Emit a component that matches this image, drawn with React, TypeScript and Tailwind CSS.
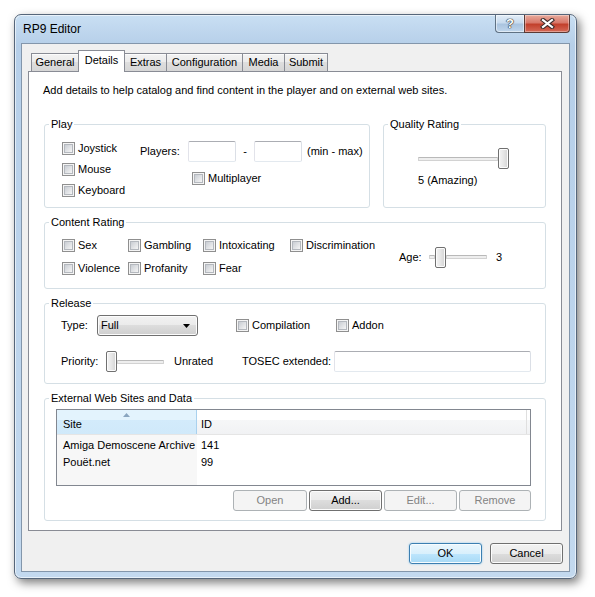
import type { ReactNode } from "react";

const FONT = "font-['Liberation_Sans',Arial,sans-serif]";

function Checkbox({ label }: { label: string }) {
  return (
    <div className="flex items-center gap-[3px]">
      <span className="flex h-[13px] w-[13px] flex-none border border-[#8f8f8f] bg-[#f4f4f4] p-px">
        <span className="h-full w-full border border-[#b4b8be] bg-[linear-gradient(135deg,#c9cdd3,#f5f5f5)]" />
      </span>
      <span className="whitespace-nowrap">{label}</span>
    </div>
  );
}

function Thumb() {
  return (
    <span className="h-[21px] w-[11px] flex-none rounded-[2px] border border-[#707070] bg-[linear-gradient(90deg,#f4f4f4,#e6e6e6_50%,#d4d4d4)] shadow-[inset_0_0_0_1px_#fcfcfc]" />
  );
}

function Track({ className = "" }: { className?: string }) {
  return (
    <span
      className={`h-[4px] flex-none rounded-[1px] border border-[#d2d2d2] border-t-[#b9b9b9] bg-[#eeeeee] ${className}`}
    />
  );
}

function TextBox({ className = "" }: { className?: string }) {
  return (
    <span
      className={`block h-[21px] flex-none rounded-[2px] border border-[#abadb3] border-r-[#dbdfe6] border-b-[#e3e9ef] border-l-[#e2e3ea] bg-white ${className}`}
    />
  );
}

function Group({
  title,
  className = "",
  children
}: {
  title: string;
  className?: string;
  children: ReactNode;
}) {
  return (
    <fieldset className={`min-w-0 rounded-[3px] border border-[#d5dfe5] ${className}`}>
      <legend className="ml-[4px] px-[2px] leading-[13px]">{title}</legend>
      {children}
    </fieldset>
  );
}

function Btn({
  label,
  variant = "normal",
  className = ""
}: {
  label: string;
  variant?: "normal" | "disabled" | "default";
  className?: string;
}) {
  const look =
    variant === "disabled"
      ? "border-[#adb2b5] bg-[#f4f4f4] text-[#838383]"
      : variant === "default"
        ? "border-[#3c7fb1] bg-[linear-gradient(#eaf6fd,#d9f0fc_50%,#bee6fd_50%,#a7d9f5)] shadow-[inset_0_0_0_1px_#f7fcfe,0_0_2px_#7ec3ee]"
        : "border-[#707070] bg-[linear-gradient(#f2f2f2,#ebebeb_50%,#dddddd_50%,#cfcfcf)] shadow-[inset_0_0_0_1px_#fcfcfc]";
  return (
    <div
      className={`flex h-[21px] flex-none items-center justify-center rounded-[3px] border ${look} ${className}`}
    >
      {label}
    </div>
  );
}

function Tab({ label, width, active = false }: { label: string; width: string; active?: boolean }) {
  return active ? (
    <div
      className={`relative z-10 -mb-px -ml-px flex h-[22px] items-center justify-center border border-b-0 border-[#898c95] bg-white pb-[2px] ${width}`}
    >
      {label}
    </div>
  ) : (
    <div
      className={`-ml-px flex h-[18px] items-center justify-center border border-b-0 border-[#898c95] bg-[linear-gradient(#f3f3f3,#ebebeb_50%,#dedede_50%,#d6d6d6)] shadow-[inset_0_1px_0_#fcfcfc] ${width}`}
    >
      {label}
    </div>
  );
}

export default function App() {
  return (
    <div
      className={`h-[597px] w-[595px] overflow-hidden bg-white pl-[14px] pt-[14px] text-[11px] leading-[13px] text-black ${FONT}`}
    >
      <div className="flex h-[565px] w-[563px] flex-col rounded-[7px] border border-[#56667a] bg-[linear-gradient(180deg,#c9dff3,#b6cfe9_30px,#c3d9ef)] shadow-[3px_4px_10px_rgba(0,0,0,0.5),inset_0_0_0_1px_rgba(255,255,255,0.6)]">
        {/* title bar */}
        <div className="flex h-[28px] flex-none justify-between">
          <span className="pl-[8px] pt-[7px] text-[12px] leading-[15px]">RP9 Editor</span>
          <div className="flex pr-[6px]">
            <div className="flex h-[18px] w-[29px] items-center justify-center rounded-bl-[4px] border border-t-0 border-r-0 border-[#5f7183] bg-[linear-gradient(#e3edf7,#c8dbee_45%,#aac4df_55%,#c0d6ec)] shadow-[inset_0_0_0_1px_rgba(255,255,255,0.5)]">
              <span className="text-[13px] font-bold leading-[13px] text-white [text-shadow:0_0_1px_#222,0_0_1px_#222,0_0_1px_#222]">
                ?
              </span>
            </div>
            <div className="flex h-[18px] w-[46px] items-center justify-center rounded-br-[4px] border border-t-0 border-[#5b3a35] bg-[linear-gradient(#e9ab9c,#d8786a_45%,#c2402c_55%,#d56a58)] shadow-[inset_0_0_0_1px_rgba(255,255,255,0.35)]">
              <svg width="15" height="11" viewBox="0 0 15 11">
                <path d="M3 2 L12 9 M12 2 L3 9" stroke="#3b2b2b" strokeWidth="4.2" strokeLinecap="square" />
                <path d="M3 2 L12 9 M12 2 L3 9" stroke="#ffffff" strokeWidth="2.2" strokeLinecap="square" />
              </svg>
            </div>
          </div>
        </div>

        {/* client area */}
        <div className="ml-[6px] flex h-[529px] w-[549px] flex-col border border-[#8396ab] bg-[#f0f0f0] px-[6px] pt-[7px]">
          <div className="ml-[4px] flex h-[20px] items-end">
            <Tab label="General" width="w-[48px]" />
            <Tab label="Details" width="w-[47px]" active />
            <Tab label="Extras" width="w-[43px]" />
            <Tab label="Configuration" width="w-[77px]" />
            <Tab label="Media" width="w-[43px]" />
            <Tab label="Submit" width="w-[44px]" />
          </div>

          <div className="flex h-[460px] w-[534px] flex-col border border-[#898c95] bg-white px-[15px] pt-[12px]">
            <p className="-ml-px">
              Add details to help catalog and find content in the player and on external web sites.
            </p>

            <div className="mt-[21px] flex gap-[13px]">
              <Group title="Play" className="h-[90px] w-[326px]">
                <div className="flex pl-[17px]">
                  <div className="flex w-[78px] flex-col pt-[7px]">
                    {["Joystick", "Mouse", "Keyboard"].map((l) => (
                      <div key={l} className="flex h-[21px] items-center">
                        <Checkbox label={l} />
                      </div>
                    ))}
                  </div>
                  <div className="flex flex-col pt-[10px]">
                    <div className="flex h-[21px] items-center">
                      <span className="w-[48px]">Players:</span>
                      <TextBox className="w-[48px]" />
                      <span className="w-[18px] text-center">-</span>
                      <TextBox className="w-[48px]" />
                      <span className="ml-[5px] whitespace-nowrap">(min - max)</span>
                    </div>
                    <div className="mt-[10px] pl-[52px]">
                      <Checkbox label="Multiplayer" />
                    </div>
                  </div>
                </div>
              </Group>

              <Group title="Quality Rating" className="h-[90px] w-[163px]">
                <div className="flex flex-col pl-[34px] pt-[17px]">
                  <div className="flex h-[21px] items-center">
                    <Track className="w-[80px]" />
                    <Thumb />
                  </div>
                  <span className="mt-[5px]">5 (Amazing)</span>
                </div>
              </Group>
            </div>

            <Group title="Content Rating" className="mt-[8px] h-[73px]">
              <div className="flex items-center pl-[17px] pt-[5px]">
                <div className="grid grid-cols-[66px_75px_87px_109px] grid-rows-[23px_23px] items-center">
                  <Checkbox label="Sex" />
                  <Checkbox label="Gambling" />
                  <Checkbox label="Intoxicating" />
                  <Checkbox label="Discrimination" />
                  <Checkbox label="Violence" />
                  <Checkbox label="Profanity" />
                  <Checkbox label="Fear" />
                </div>
                <span className="w-[30px]">Age:</span>
                <div className="flex h-[21px] w-[58px] items-center">
                  <Track className="w-[6px]" />
                  <Thumb />
                  <Track className="w-[41px]" />
                </div>
                <span className="ml-[9px]">3</span>
              </div>
            </Group>

            <Group title="Release" className="mt-[8px] h-[87px]">
              <div className="flex flex-col pl-[16px] pt-[5px]">
                <div className="flex h-[21px] items-center">
                  <span className="w-[36px]">Type:</span>
                  <div className="flex h-[21px] w-[101px] items-center justify-between rounded-[3px] border border-[#707070] bg-[linear-gradient(#f2f2f2,#ebebeb_50%,#dddddd_50%,#cfcfcf)] pl-[3px] pr-[7px] shadow-[inset_0_0_0_1px_#fcfcfc]">
                    <span>Full</span>
                    <svg width="7" height="4" viewBox="0 0 7 4">
                      <path d="M0 0 H7 L3.5 4 Z" fill="#000" />
                    </svg>
                  </div>
                  <div className="ml-[38px] w-[100px]">
                    <Checkbox label="Compilation" />
                  </div>
                  <Checkbox label="Addon" />
                </div>
                <div className="mt-[15px] flex h-[21px] items-center">
                  <span className="w-[45px]">Priority:</span>
                  <div className="flex h-[21px] items-center">
                    <Thumb />
                    <Track className="w-[47px]" />
                  </div>
                  <span className="ml-[10px] w-[68px]">Unrated</span>
                  <span className="w-[92px] whitespace-nowrap">TOSEC extended:</span>
                  <TextBox className="w-[197px]" />
                </div>
              </div>
            </Group>

            <Group title="External Web Sites and Data" className="mt-[8px] h-[129px]">
              <div className="flex flex-col pl-[11px] pt-[4px]">
                <div className="flex h-[77px] w-[475px] flex-col border border-[#828790] bg-white">
                  <div className="flex h-[25px] flex-none border-b border-[#e5e5e5]">
                    <div className="relative w-[140px] border-r border-[#a9d1ee] bg-[linear-gradient(#e3f3fd,#e3f3fd_40%,#d3ebfb_40%,#d0e9fa)] pl-[6px] pt-[8px]">
                      <svg
                        className="absolute left-[66px] top-[3px]"
                        width="7"
                        height="4"
                        viewBox="0 0 7 4"
                      >
                        <path d="M3.5 0 L7 4 H0 Z" fill="#8aa5bf" />
                      </svg>
                      Site
                    </div>
                    <div className="w-[330px] border-r border-[#dfdfdf] bg-[linear-gradient(#ffffff,#ffffff_40%,#f6f7f8_40%,#f1f2f4)] pl-[4px] pt-[8px]">
                      ID
                    </div>
                    <div className="flex-1 bg-[linear-gradient(#ffffff,#ffffff_40%,#f6f7f8_40%,#f1f2f4)]" />
                  </div>
                  <div className="flex flex-1">
                    <div className="flex w-[140px] flex-col bg-[#f7f7f7] pl-[6px] pt-[2px]">
                      <span className="h-[17px] leading-[17px]">Amiga Demoscene Archive</span>
                      <span className="h-[17px] leading-[17px]">Pouët.net</span>
                    </div>
                    <div className="flex flex-col pl-[4px] pt-[2px]">
                      <span className="h-[17px] leading-[17px]">141</span>
                      <span className="h-[17px] leading-[17px]">99</span>
                    </div>
                  </div>
                </div>
                <div className="mt-[4px] flex w-[475px] justify-end gap-[2px]">
                  <Btn label="Open" variant="disabled" className="w-[74px]" />
                  <Btn label="Add..." className="w-[73px]" />
                  <Btn label="Edit..." variant="disabled" className="w-[73px]" />
                  <Btn label="Remove" variant="disabled" className="w-[72px]" />
                </div>
              </div>
            </Group>
          </div>

          <div className="mt-[12px] flex justify-end gap-[8px]">
            <Btn label="OK" variant="default" className="w-[73px]" />
            <Btn label="Cancel" className="w-[73px]" />
          </div>
        </div>
      </div>
    </div>
  );
}
